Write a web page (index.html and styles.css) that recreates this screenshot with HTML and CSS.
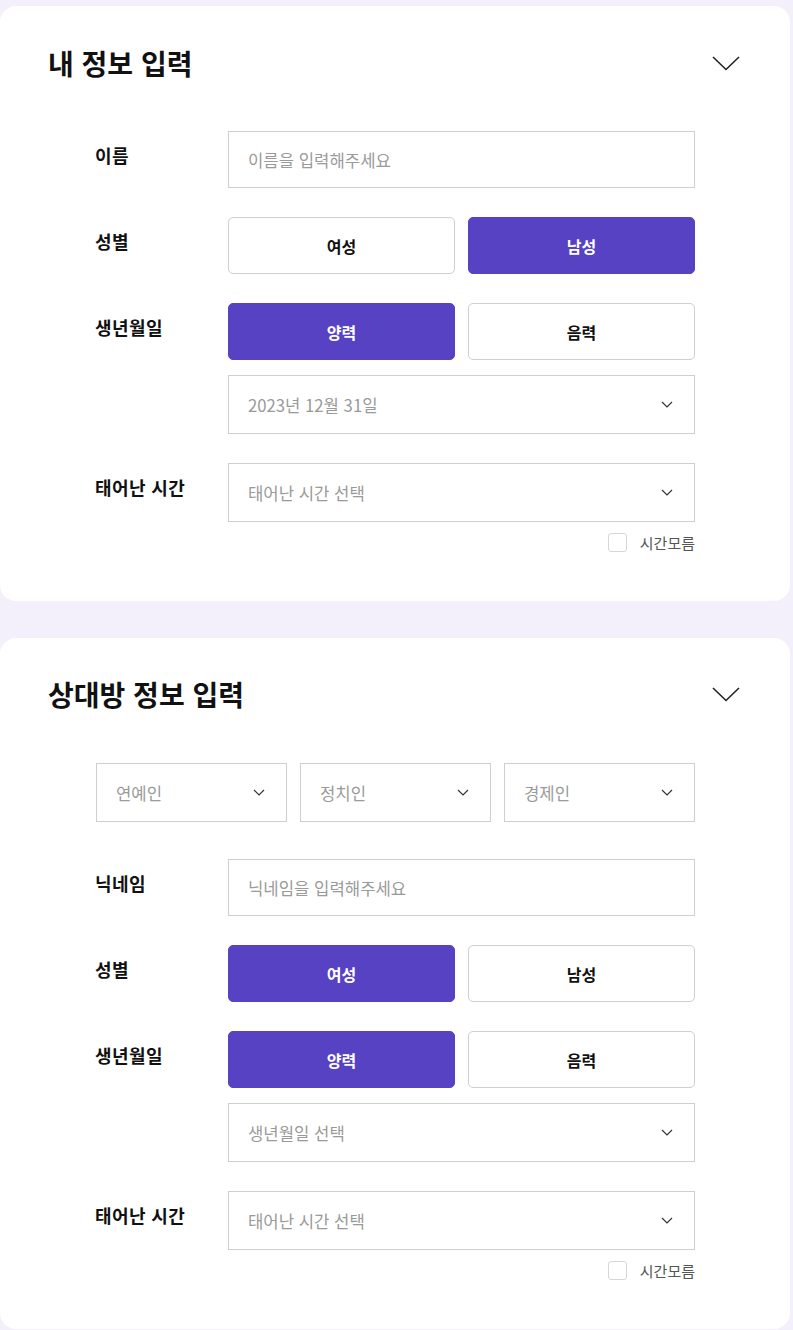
FILE: index.html
```html
<!DOCTYPE html>
<html lang="ko">
<head>
<meta charset="utf-8">
<title>정보 입력</title>
<link rel="stylesheet" href="styles.css">
</head>
<body>
<main class="page">
  <section class="card card-me">
    <header class="card-head">
      <h2 class="card-title">내 정보 입력</h2>
      <svg class="head-chevron" width="28" height="15" viewBox="0 0 28 15"><polyline points="1,1 14,13.5 27,1" fill="none" stroke="#222" stroke-width="1.6"/></svg>
    </header>
    <div class="form">
      <div class="row">
        <div class="label">이름</div>
        <div class="field">
          <div class="input placeholder">이름을 입력해주세요</div>
        </div>
      </div>
      <div class="row">
        <div class="label">성별</div>
        <div class="field">
          <div class="toggle">
            <div class="btn">여성</div>
            <div class="btn active">남성</div>
          </div>
        </div>
      </div>
      <div class="row">
        <div class="label">생년월일</div>
        <div class="field stack">
          <div class="toggle">
            <div class="btn active">양력</div>
            <div class="btn">음력</div>
          </div>
          <div class="select"><span class="placeholder">2023년 12월 31일</span><svg class="sel-chevron" width="12" height="7" viewBox="0 0 12 7"><polyline points="1,1 6,6 11,1" fill="none" stroke="#333" stroke-width="1.2"/></svg></div>
        </div>
      </div>
      <div class="row">
        <div class="label">태어난 시간</div>
        <div class="field">
          <div class="select"><span class="placeholder">태어난 시간 선택</span><svg class="sel-chevron" width="12" height="7" viewBox="0 0 12 7"><polyline points="1,1 6,6 11,1" fill="none" stroke="#333" stroke-width="1.2"/></svg></div>
          <label class="check"><span class="box"></span><span class="check-text">시간모름</span></label>
        </div>
      </div>
    </div>
  </section>

  <section class="card card-other">
    <header class="card-head">
      <h2 class="card-title">상대방 정보 입력</h2>
      <svg class="head-chevron" width="28" height="15" viewBox="0 0 28 15"><polyline points="1,1 14,13.5 27,1" fill="none" stroke="#222" stroke-width="1.6"/></svg>
    </header>
    <div class="form">
      <div class="tri">
        <div class="select small"><span class="placeholder">연예인</span><svg class="sel-chevron" width="12" height="7" viewBox="0 0 12 7"><polyline points="1,1 6,6 11,1" fill="none" stroke="#333" stroke-width="1.2"/></svg></div>
        <div class="select small"><span class="placeholder">정치인</span><svg class="sel-chevron" width="12" height="7" viewBox="0 0 12 7"><polyline points="1,1 6,6 11,1" fill="none" stroke="#333" stroke-width="1.2"/></svg></div>
        <div class="select small"><span class="placeholder">경제인</span><svg class="sel-chevron" width="12" height="7" viewBox="0 0 12 7"><polyline points="1,1 6,6 11,1" fill="none" stroke="#333" stroke-width="1.2"/></svg></div>
      </div>
      <div class="row">
        <div class="label">닉네임</div>
        <div class="field">
          <div class="input placeholder">닉네임을 입력해주세요</div>
        </div>
      </div>
      <div class="row">
        <div class="label">성별</div>
        <div class="field">
          <div class="toggle">
            <div class="btn active">여성</div>
            <div class="btn">남성</div>
          </div>
        </div>
      </div>
      <div class="row">
        <div class="label">생년월일</div>
        <div class="field stack">
          <div class="toggle">
            <div class="btn active">양력</div>
            <div class="btn">음력</div>
          </div>
          <div class="select"><span class="placeholder">생년월일 선택</span><svg class="sel-chevron" width="12" height="7" viewBox="0 0 12 7"><polyline points="1,1 6,6 11,1" fill="none" stroke="#333" stroke-width="1.2"/></svg></div>
        </div>
      </div>
      <div class="row">
        <div class="label">태어난 시간</div>
        <div class="field">
          <div class="select"><span class="placeholder">태어난 시간 선택</span><svg class="sel-chevron" width="12" height="7" viewBox="0 0 12 7"><polyline points="1,1 6,6 11,1" fill="none" stroke="#333" stroke-width="1.2"/></svg></div>
          <label class="check"><span class="box"></span><span class="check-text">시간모름</span></label>
        </div>
      </div>
    </div>
  </section>
</main>
</body>
</html>
```

FILE: styles.css
```css
* { box-sizing: border-box; }
html, body { margin: 0; padding: 0; }
body {
  background: #f3f0fb;
  font-family: "Noto Sans CJK KR", "Noto Sans", sans-serif;
  color: #111;
}
.page {
  padding: 6px 3px 0 0;
  display: flex;
  flex-direction: column;
  gap: 37px;
}
.card {
  background: #fff;
  border-radius: 16px;
  padding: 36px 51px 49px 48px;
}
.card-other { padding-top: 35px; padding-bottom: 49px; }
.card-head {
  display: flex;
  align-items: center;
  justify-content: space-between;
  height: 42px;
}
.card-title {
  margin: 0;
  font-size: 28px;
  font-weight: 700;
  letter-spacing: 0;
  color: #111;
}
.head-chevron { display: block; margin-right: -1px; }
.form {
  margin: 47px 44px 0 47px;
  display: flex;
  flex-direction: column;
  gap: 29px;
}
.card-other .form { margin-top: 48px; }
.card-other .tri { margin-left: 1px; margin-bottom: 8px; }
.row { display: flex; align-items: flex-start; }
.label {
  width: 133px;
  flex: none;
  font-size: 18px;
  font-weight: 700;
  letter-spacing: 0.4px;
  line-height: 24px;
  padding-top: 12px;
  color: #111;
}
.field { flex: 1; display: flex; flex-direction: column; }
.stack { gap: 15px; }
.input {
  height: 57px;
  border: 1px solid #cfcfcf;
  display: flex;
  align-items: center;
  padding-left: 19px;
}
.placeholder { color: #9a9a9a; font-size: 16.7px; }
.toggle { display: flex; gap: 13px; }
.btn {
  flex: 1;
  height: 57px;
  border: 1px solid #cfcfcf;
  border-radius: 5px;
  display: flex;
  align-items: center;
  justify-content: center;
  font-size: 16px;
  font-weight: 700;
  color: #111;
  background: #fff;
}
.btn.active {
  background: #5642c3;
  border-color: #5642c3;
  color: #fff;
}
.select {
  height: 59px;
  border: 1px solid #cfcfcf;
  display: flex;
  align-items: center;
  justify-content: space-between;
  padding: 0 21px 0 19px;
}
.sel-chevron { display: block; }
.tri { display: flex; gap: 13px; }
.tri .select { flex: 1; }
.check {
  display: flex;
  align-items: center;
  justify-content: flex-end;
  gap: 13px;
  margin-top: 11px;
  height: 19px;
}
.box {
  width: 19px;
  height: 19px;
  border: 1px solid #d6d6d6;
  border-radius: 3px;
  background: #fff;
}
.check-text { font-size: 15px; color: #555; }
```
